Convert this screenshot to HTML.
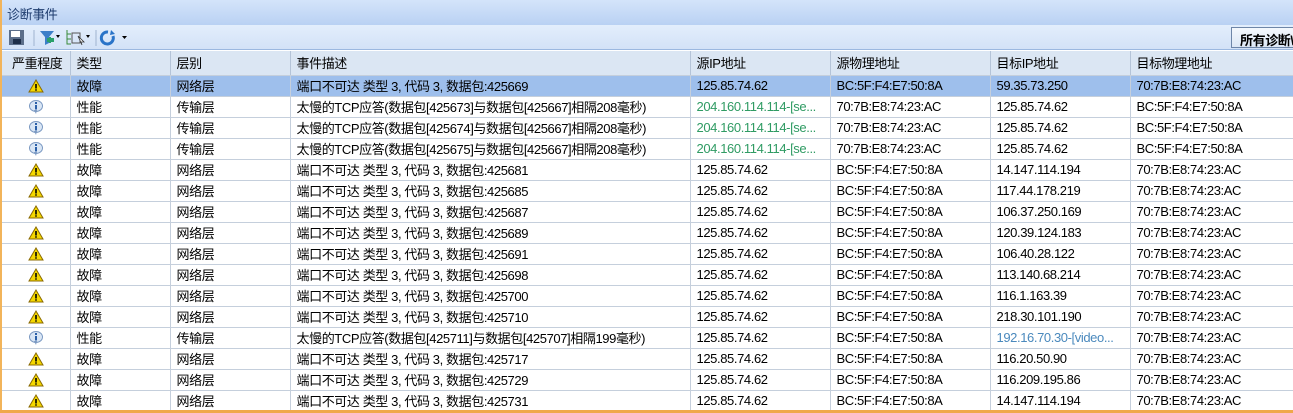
<!DOCTYPE html>
<html><head><meta charset="utf-8"><style>
*{margin:0;padding:0;box-sizing:border-box}
body{width:1293px;height:413px;overflow:hidden;background:#fff;font-family:"Liberation Sans","Noto Sans CJK SC",sans-serif;font-size:13px;letter-spacing:-0.4px;color:#000;position:relative}
#title{position:absolute;left:0;top:0;width:1293px;height:25px;background:linear-gradient(#d4e4fa,#b9d1f3);color:#1e3c6e;padding:4px 0 0 7px;font-size:13px}
#tb{position:absolute;left:0;top:25px;width:1293px;height:25px;background:linear-gradient(#e3eefc,#d3e2f7);border-bottom:1px solid #9bb8e0}
#btn{position:absolute;left:1231px;top:2px;width:70px;height:21px;border:1px solid #6e86a8;background:linear-gradient(#f4f8fd,#dce7f5);font-weight:bold;padding:2px 0 0 8px;white-space:nowrap;overflow:hidden}
#lb{position:absolute;left:0;top:0;width:2px;height:413px;background:#f2b45a}
table{position:absolute;left:2px;top:51px;border-collapse:collapse;table-layout:fixed;width:1291px}
td,th{height:21px;border-right:1px solid #c5cfdc;border-bottom:1px solid #c5cfdc;padding:0 0 0 6px;white-space:nowrap;overflow:hidden;font-weight:normal;text-align:left}
th{height:24px;background:#dbe6f3;border-right:1px solid #b5c4d8}
th:first-child{padding-left:10px}
tr.sel td{background:#9ebfec}
td.ic{text-align:center;padding:0}
td.ic svg{display:block;margin:0 auto}
.g{color:#2f9b63}.b{color:#4a89bd}
#bot{position:absolute;left:0;top:410px;width:1293px;height:3px;background:#f0a84a}
</style></head><body>
<div id="title">诊断事件</div>
<div id="tb">
<svg width="140" height="25" style="position:absolute;left:6px;top:0">
<rect x="3" y="5" width="15" height="15" fill="#5b6e8a"/><rect x="5" y="6" width="9" height="6" fill="#fff"/><rect x="7" y="14" width="8" height="5" fill="#1e2f4a"/>
<line x1="28" y1="5" x2="28" y2="21" stroke="#9fb3cf"/>
<path d="M34 6h14l-5 6v6l-4 2v-8z" fill="#3c7fc8"/><path d="M42 14h5v2h-5z M44 12v6" stroke="#2aa06a" stroke-width="2"/><path d="M50 10h4l-2 3z" fill="#000"/>
<path d="M61 5v14h4M61 9h4M61 14h4" stroke="#3a8a3a" fill="none"/><rect x="66" y="8" width="8" height="10" fill="none" stroke="#555"/><path d="M72 11l6 6-3 0 1 3z" fill="#fff" stroke="#333" stroke-width=".8"/><path d="M80 10h4l-2 3z" fill="#000"/>
<line x1="90" y1="5" x2="90" y2="21" stroke="#9fb3cf"/>
<path d="M102 7a6 6 0 1 0 5 4" stroke="#2a74c8" stroke-width="3" fill="none"/><path d="M105 5l4 4-5 1z" fill="#2a74c8"/><path d="M116 11h5l-2.5 3z" fill="#000"/>
</svg>
<div id="btn">所有诊断\</div>
</div>
<div id="lb"></div>
<table>
<colgroup><col style="width:68px"><col style="width:100px"><col style="width:120px"><col style="width:400px"><col style="width:140px"><col style="width:160px"><col style="width:140px"><col style="width:163px"></colgroup>
<tr><th>严重程度</th><th>类型</th><th>层别</th><th>事件描述</th><th>源IP地址</th><th>源物理地址</th><th>目标IP地址</th><th>目标物理地址</th></tr>
</table>
<script>
var W='<svg width="16" height="14"><path d="M8 1L15 13H1z" fill="#f5d800" stroke="#8a6a00"/><rect x="7.2" y="5" width="1.6" height="4.5" fill="#000"/><rect x="7.2" y="10.3" width="1.6" height="1.4" fill="#000"/></svg>';
var I='<svg width="16" height="16"><ellipse cx="8" cy="7" rx="6.5" ry="5.5" fill="#d9e6f5" stroke="#7b99c2"/><path d="M6 11l2 4 1-4z" fill="#7b99c2"/><rect x="7" y="3" width="2" height="2" fill="#2a5fa8"/><rect x="7" y="6" width="2" height="4.5" fill="#2a5fa8"/></svg>';
var d=[
['W','故障','网络层','端口不可达 类型 3, 代码 3, 数据包:425669','125.85.74.62','BC:5F:F4:E7:50:8A','59.35.73.250','70:7B:E8:74:23:AC',1],
['I','性能','传输层','太慢的TCP应答(数据包[425673]与数据包[425667]相隔208毫秒)','<span class=g>204.160.114.114-[se...</span>','70:7B:E8:74:23:AC','125.85.74.62','BC:5F:F4:E7:50:8A'],
['I','性能','传输层','太慢的TCP应答(数据包[425674]与数据包[425667]相隔208毫秒)','<span class=g>204.160.114.114-[se...</span>','70:7B:E8:74:23:AC','125.85.74.62','BC:5F:F4:E7:50:8A'],
['I','性能','传输层','太慢的TCP应答(数据包[425675]与数据包[425667]相隔208毫秒)','<span class=g>204.160.114.114-[se...</span>','70:7B:E8:74:23:AC','125.85.74.62','BC:5F:F4:E7:50:8A'],
['W','故障','网络层','端口不可达 类型 3, 代码 3, 数据包:425681','125.85.74.62','BC:5F:F4:E7:50:8A','14.147.114.194','70:7B:E8:74:23:AC'],
['W','故障','网络层','端口不可达 类型 3, 代码 3, 数据包:425685','125.85.74.62','BC:5F:F4:E7:50:8A','117.44.178.219','70:7B:E8:74:23:AC'],
['W','故障','网络层','端口不可达 类型 3, 代码 3, 数据包:425687','125.85.74.62','BC:5F:F4:E7:50:8A','106.37.250.169','70:7B:E8:74:23:AC'],
['W','故障','网络层','端口不可达 类型 3, 代码 3, 数据包:425689','125.85.74.62','BC:5F:F4:E7:50:8A','120.39.124.183','70:7B:E8:74:23:AC'],
['W','故障','网络层','端口不可达 类型 3, 代码 3, 数据包:425691','125.85.74.62','BC:5F:F4:E7:50:8A','106.40.28.122','70:7B:E8:74:23:AC'],
['W','故障','网络层','端口不可达 类型 3, 代码 3, 数据包:425698','125.85.74.62','BC:5F:F4:E7:50:8A','113.140.68.214','70:7B:E8:74:23:AC'],
['W','故障','网络层','端口不可达 类型 3, 代码 3, 数据包:425700','125.85.74.62','BC:5F:F4:E7:50:8A','116.1.163.39','70:7B:E8:74:23:AC'],
['W','故障','网络层','端口不可达 类型 3, 代码 3, 数据包:425710','125.85.74.62','BC:5F:F4:E7:50:8A','218.30.101.190','70:7B:E8:74:23:AC'],
['I','性能','传输层','太慢的TCP应答(数据包[425711]与数据包[425707]相隔199毫秒)','125.85.74.62','BC:5F:F4:E7:50:8A','<span class=b>192.16.70.30-[video...</span>','70:7B:E8:74:23:AC'],
['W','故障','网络层','端口不可达 类型 3, 代码 3, 数据包:425717','125.85.74.62','BC:5F:F4:E7:50:8A','116.20.50.90','70:7B:E8:74:23:AC'],
['W','故障','网络层','端口不可达 类型 3, 代码 3, 数据包:425729','125.85.74.62','BC:5F:F4:E7:50:8A','116.209.195.86','70:7B:E8:74:23:AC'],
['W','故障','网络层','端口不可达 类型 3, 代码 3, 数据包:425731','125.85.74.62','BC:5F:F4:E7:50:8A','14.147.114.194','70:7B:E8:74:23:AC']];
var t=document.querySelector('table'),h='';
d.forEach(function(r){h+='<tr'+(r[8]?' class=sel':'')+'><td class=ic>'+(r[0]=='W'?W:I)+'</td>';for(var i=1;i<8;i++)h+='<td>'+r[i]+'</td>';h+='</tr>';});
t.insertAdjacentHTML('beforeend',h);
</script>
<div id="bot"></div>
</body></html>
